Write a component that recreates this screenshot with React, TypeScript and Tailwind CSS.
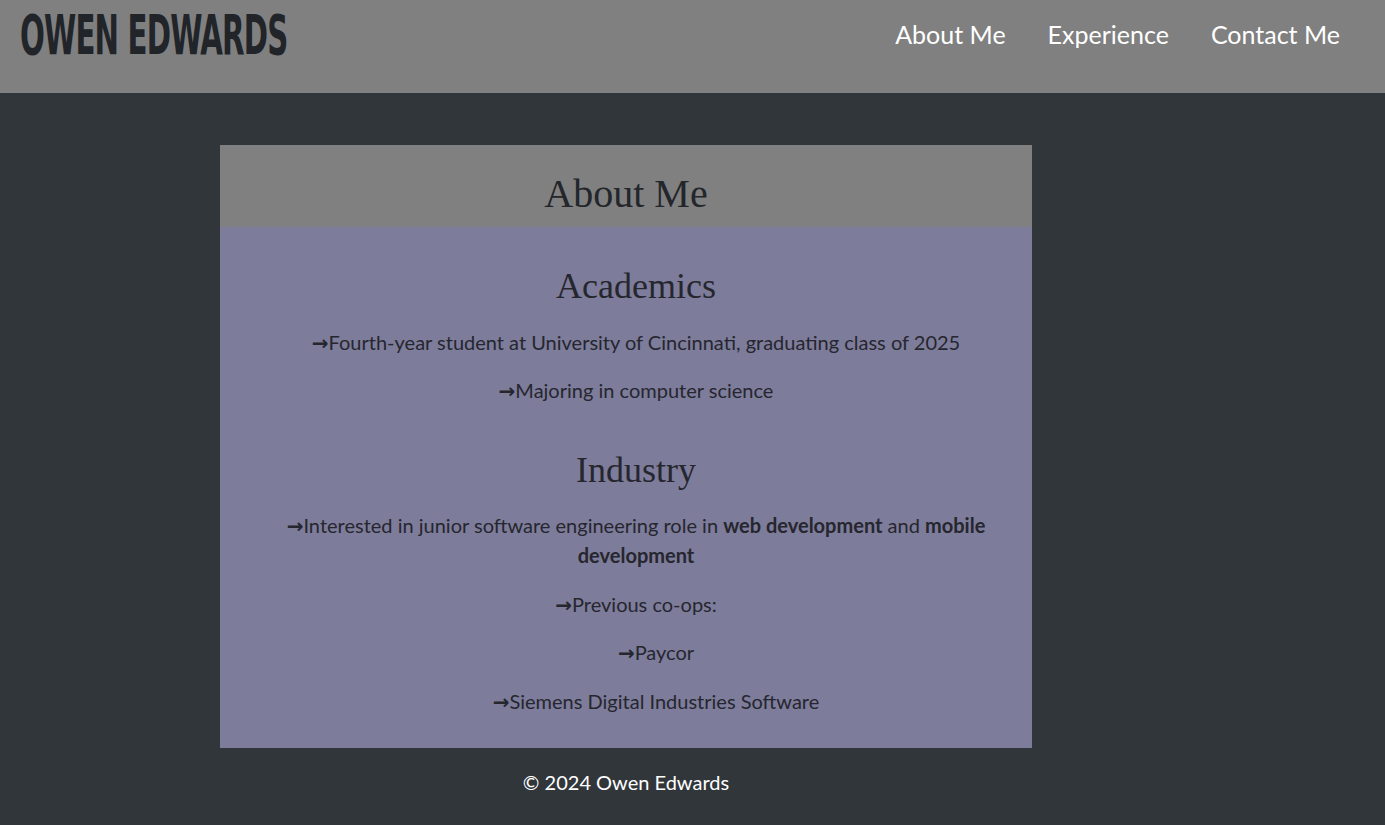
import React from 'react';

const Line: React.FC<{ children: React.ReactNode; sub?: boolean }> = ({ children, sub }) => (
  <p className={sub ? 'text-[20px] leading-[30px] pl-10' : 'text-[20px] leading-[30px]'}>
    <span className="font-bold font-['DejaVu_Sans',sans-serif] text-[20px] leading-[0]">→</span>
    {children}
  </p>
);

export default function App() {
  return (
    <div className="min-h-screen bg-[#31363b] font-['Lato',sans-serif]">
      <header className="h-[93px] bg-[#808080] flex items-start justify-between pl-5 pr-[45px]">
        <div className="h-[70px] flex items-center">
          <h1 className="text-[56px] leading-none font-bold text-[#212429] font-['Liberation_Sans_Narrow','DejaVu_Sans_Condensed',sans-serif] scale-x-[0.58] origin-left tracking-tight whitespace-nowrap">
            OWEN EDWARDS
          </h1>
        </div>
        <nav className="h-[70px] flex items-center gap-[42px] text-white text-[25px]">
          <a href="#about">About Me</a>
          <a href="#experience">Experience</a>
          <a href="#contact">Contact Me</a>
        </nav>
      </header>

      <main className="ml-[220px] w-[812px] mt-[52px]">
        <section className="bg-[#7d7c9b]">
          <div className="h-[82px] bg-[#808080] pt-[25px] text-center">
            <h2 className="text-[40px] leading-[48px] text-[#23262b] font-['Liberation_Serif',serif]">About Me</h2>
          </div>
          <div className="pl-5 pb-[32px] text-center text-[#26262e]">
            <h3 className="mt-[37px] text-[36px] leading-[44px] font-['Liberation_Serif',serif]">Academics</h3>
            <div className="mt-[19px] flex flex-col gap-[18px]">
              <Line>Fourth-year student at University of Cincinnati, graduating class of 2025</Line>
              <Line>Majoring in computer science</Line>
            </div>
            <h3 className="mt-[43px] text-[36px] leading-[44px] font-['Liberation_Serif',serif]">Industry</h3>
            <div className="mt-[18px] flex flex-col gap-[18.6px] px-10">
              <Line>
                Interested in junior software engineering role in <b>web development</b> and <b>mobile development</b>
              </Line>
              <Line>Previous co-ops:</Line>
              <Line sub>Paycor</Line>
              <Line sub>Siemens Digital Industries Software</Line>
            </div>
          </div>
        </section>
        <footer className="mt-[19px] text-center text-white text-[20px] leading-[30px]">
          © 2024 Owen Edwards
        </footer>
      </main>
    </div>
  );
}
